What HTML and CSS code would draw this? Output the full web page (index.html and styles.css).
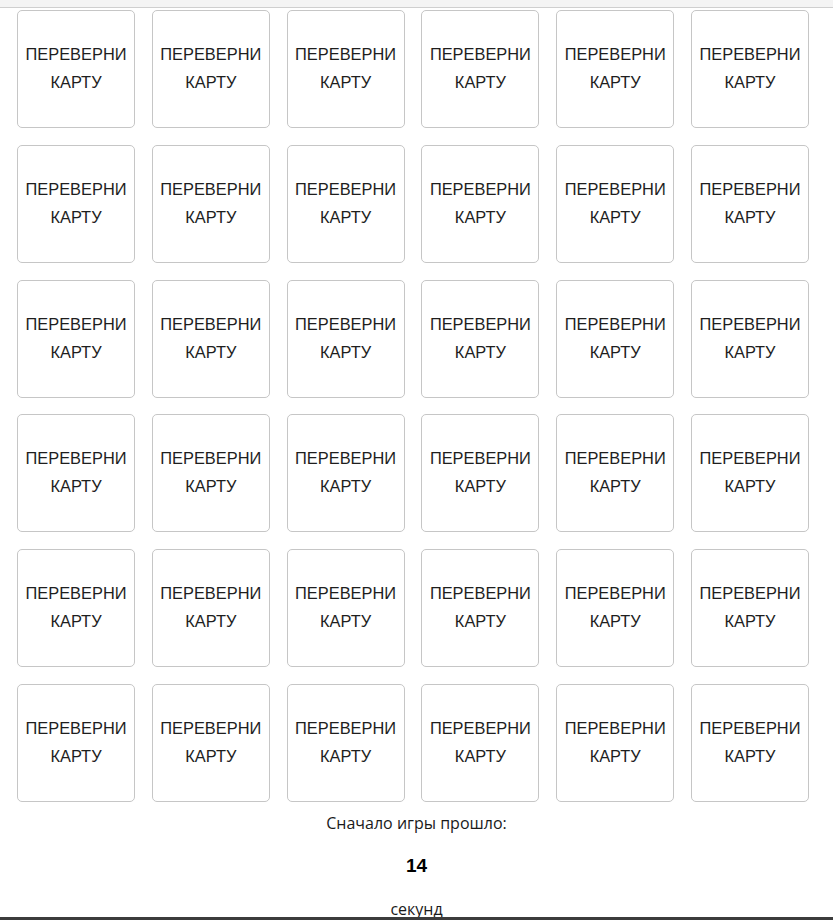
FILE: index.html
```html
<!DOCTYPE html>
<html lang="ru">
<head>
<meta charset="utf-8">
<title>Переверни карту</title>
<link rel="stylesheet" href="styles.css">
</head>
<body>
<div class="topbar"></div>
<main class="board">
  <button class="card">ПЕРЕВЕРНИ КАРТУ</button>
  <button class="card">ПЕРЕВЕРНИ КАРТУ</button>
  <button class="card">ПЕРЕВЕРНИ КАРТУ</button>
  <button class="card">ПЕРЕВЕРНИ КАРТУ</button>
  <button class="card">ПЕРЕВЕРНИ КАРТУ</button>
  <button class="card">ПЕРЕВЕРНИ КАРТУ</button>
  <button class="card">ПЕРЕВЕРНИ КАРТУ</button>
  <button class="card">ПЕРЕВЕРНИ КАРТУ</button>
  <button class="card">ПЕРЕВЕРНИ КАРТУ</button>
  <button class="card">ПЕРЕВЕРНИ КАРТУ</button>
  <button class="card">ПЕРЕВЕРНИ КАРТУ</button>
  <button class="card">ПЕРЕВЕРНИ КАРТУ</button>
  <button class="card">ПЕРЕВЕРНИ КАРТУ</button>
  <button class="card">ПЕРЕВЕРНИ КАРТУ</button>
  <button class="card">ПЕРЕВЕРНИ КАРТУ</button>
  <button class="card">ПЕРЕВЕРНИ КАРТУ</button>
  <button class="card">ПЕРЕВЕРНИ КАРТУ</button>
  <button class="card">ПЕРЕВЕРНИ КАРТУ</button>
  <button class="card">ПЕРЕВЕРНИ КАРТУ</button>
  <button class="card">ПЕРЕВЕРНИ КАРТУ</button>
  <button class="card">ПЕРЕВЕРНИ КАРТУ</button>
  <button class="card">ПЕРЕВЕРНИ КАРТУ</button>
  <button class="card">ПЕРЕВЕРНИ КАРТУ</button>
  <button class="card">ПЕРЕВЕРНИ КАРТУ</button>
  <button class="card">ПЕРЕВЕРНИ КАРТУ</button>
  <button class="card">ПЕРЕВЕРНИ КАРТУ</button>
  <button class="card">ПЕРЕВЕРНИ КАРТУ</button>
  <button class="card">ПЕРЕВЕРНИ КАРТУ</button>
  <button class="card">ПЕРЕВЕРНИ КАРТУ</button>
  <button class="card">ПЕРЕВЕРНИ КАРТУ</button>
  <button class="card">ПЕРЕВЕРНИ КАРТУ</button>
  <button class="card">ПЕРЕВЕРНИ КАРТУ</button>
  <button class="card">ПЕРЕВЕРНИ КАРТУ</button>
  <button class="card">ПЕРЕВЕРНИ КАРТУ</button>
  <button class="card">ПЕРЕВЕРНИ КАРТУ</button>
  <button class="card">ПЕРЕВЕРНИ КАРТУ</button>
</main>
<section class="timer">
  <p class="timer-label">Сначало игры прошло:</p>
  <p class="timer-value">14</p>
  <p class="timer-unit">секунд</p>
</section>
<div class="bottombar"></div>
</body>
</html>
```

FILE: styles.css
```css
html, body {
  margin: 0;
  padding: 0;
  background: #ffffff;
}

body {
  font-family: "Open Sans", "Noto Sans", sans-serif;
  color: #1a1a1a;
}

.topbar {
  height: 7px;
  background: #f4f4f4;
  border-bottom: 1px solid #cfcfcf;
}

.board {
  display: grid;
  grid-template-columns: repeat(6, 118px);
  gap: 16.8px;
  padding: 2px 0 0 17px;
}

.card {
  box-sizing: border-box;
  width: 118px;
  height: 118px;
  margin: 0;
  padding: 0 2px 2px;
  background: #ffffff;
  border: 1px solid #c6c6c6;
  border-radius: 5px;
  font-family: "Liberation Sans", Arial, sans-serif;
  font-size: 16.4px;
  line-height: 28px;
  color: #1e1e1e;
  text-align: center;
  display: flex;
  align-items: center;
  justify-content: center;
}

.timer {
  text-align: center;
  padding-top: 11px;
}

.timer p {
  margin: 0;
  line-height: 20px;
}

.timer-label {
  font-size: 16px;
}

.timer-value {
  margin-top: 23px !important;
  font-family: "Liberation Sans", Arial, sans-serif;
  font-weight: bold;
  font-size: 19px;
  color: #000;
}

.timer-unit {
  margin-top: 23px !important;
  font-size: 16px;
}

.bottombar {
  position: fixed;
  left: 0;
  right: 0;
  bottom: 0;
  height: 3px;
  background: #3c3c3c;
}
```
